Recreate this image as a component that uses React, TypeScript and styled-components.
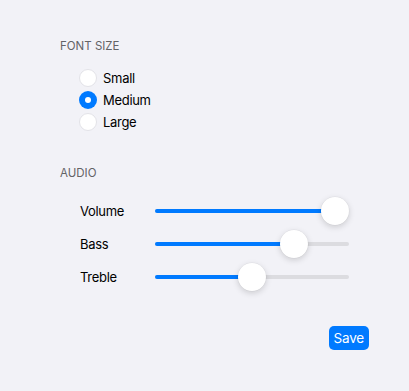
import React, { useState } from 'react'
import styled, { createGlobalStyle } from 'styled-components'

const GlobalStyle = createGlobalStyle`
  body {
    margin: 0;
    background: #f2f2f7;
    font-family: Inter, "Noto Sans", "Liberation Sans", sans-serif;
    -webkit-font-smoothing: antialiased;
  }
`

const Page = styled.div`
  width: 409px;
  height: 391px;
  box-sizing: border-box;
  padding: 38px 40px 0;
  background: #f2f2f7;
`

const Section = styled.section<{ gapTop?: number }>`
  padding: 0 20px;
  margin-top: ${props => props.gapTop ?? 0}px;
`

const SectionTitle = styled.div`
  font-size: 11.5px;
  line-height: 16px;
  color: #636366;
  text-transform: uppercase;
`

const RadioList = styled.div`
  display: flex;
  flex-direction: column;
  margin-top: 13px;
  padding-left: 19px;
`

const RadioRow = styled.label`
  display: flex;
  align-items: center;
  gap: 6px;
  height: 22px;
  font-size: 13px;
  letter-spacing: -0.3px;
  color: #000;
  cursor: pointer;
`

const RadioCircle = styled.span<{ checked: boolean }>`
  box-sizing: border-box;
  width: 18px;
  height: 18px;
  border-radius: 50%;
  display: flex;
  align-items: center;
  justify-content: center;
  background: ${props => (props.checked ? '#007aff' : '#ffffff')};
  border: ${props => (props.checked ? 'none' : '1px solid #e3e3e8')};

  &::after {
    content: '';
    width: 6px;
    height: 6px;
    border-radius: 50%;
    background: #ffffff;
    display: ${props => (props.checked ? 'block' : 'none')};
  }
`

const SliderList = styled.div`
  display: flex;
  flex-direction: column;
  margin-top: 13px;
`

const SliderRow = styled.div`
  display: grid;
  grid-template-columns: 75px 1fr;
  align-items: center;
  height: 33px;
  padding-left: 20px;
`

const SliderLabel = styled.span`
  font-size: 13px;
  letter-spacing: -0.3px;
  color: #000;
`

const Track = styled.div`
  position: relative;
  height: 4px;
  border-radius: 2px;
  background: #dcdce0;
`

const Fill = styled.div`
  position: absolute;
  left: 0;
  top: 0;
  bottom: 0;
  border-radius: 2px;
  background: #007aff;
`

const Thumb = styled.div`
  position: absolute;
  top: 50%;
  width: 28px;
  height: 28px;
  margin-left: -14px;
  margin-top: -14px;
  border-radius: 50%;
  background: #ffffff;
  box-shadow: 0 2px 6px rgba(0, 0, 0, 0.16), 0 0 0 0.5px rgba(0, 0, 0, 0.05);
`

const Footer = styled.div`
  display: flex;
  justify-content: flex-end;
  margin-top: 33px;
`

const SaveButton = styled.button`
  height: 24px;
  padding: 0 5px;
  border: none;
  border-radius: 5px;
  background: #007aff;
  color: #ffffff;
  font-family: inherit;
  font-size: 13.5px;
  letter-spacing: -0.2px;
  cursor: pointer;
`

const sizes = ['Small', 'Medium', 'Large']

const Slider: React.FC<{ value: number }> = ({ value }) => {
  // thumb stays inside the track, like a native range input
  const pos = `calc(14px + (100% - 28px) * ${value / 100})`
  return (
    <Track>
      <Fill style={{ width: pos }} />
      <Thumb style={{ left: pos }} />
    </Track>
  )
}

const App: React.FC = () => {
  const [size, setSize] = useState('Medium')
  const audio = [
    { name: 'Volume', value: 100 },
    { name: 'Bass', value: 75 },
    { name: 'Treble', value: 50 },
  ]

  return (
    <Page>
      <GlobalStyle />
      <Section>
        <SectionTitle>Font Size</SectionTitle>
        <RadioList>
          {sizes.map(s => (
            <RadioRow key={s} onClick={() => setSize(s)}>
              <RadioCircle checked={size === s} />
              {s}
            </RadioRow>
          ))}
        </RadioList>
      </Section>

      <Section gapTop={32}>
        <SectionTitle>Audio</SectionTitle>
        <SliderList>
          {audio.map(a => (
            <SliderRow key={a.name}>
              <SliderLabel>{a.name}</SliderLabel>
              <Slider value={a.value} />
            </SliderRow>
          ))}
        </SliderList>
      </Section>

      <Footer>
        <SaveButton>Save</SaveButton>
      </Footer>
    </Page>
  )
}

export default App
